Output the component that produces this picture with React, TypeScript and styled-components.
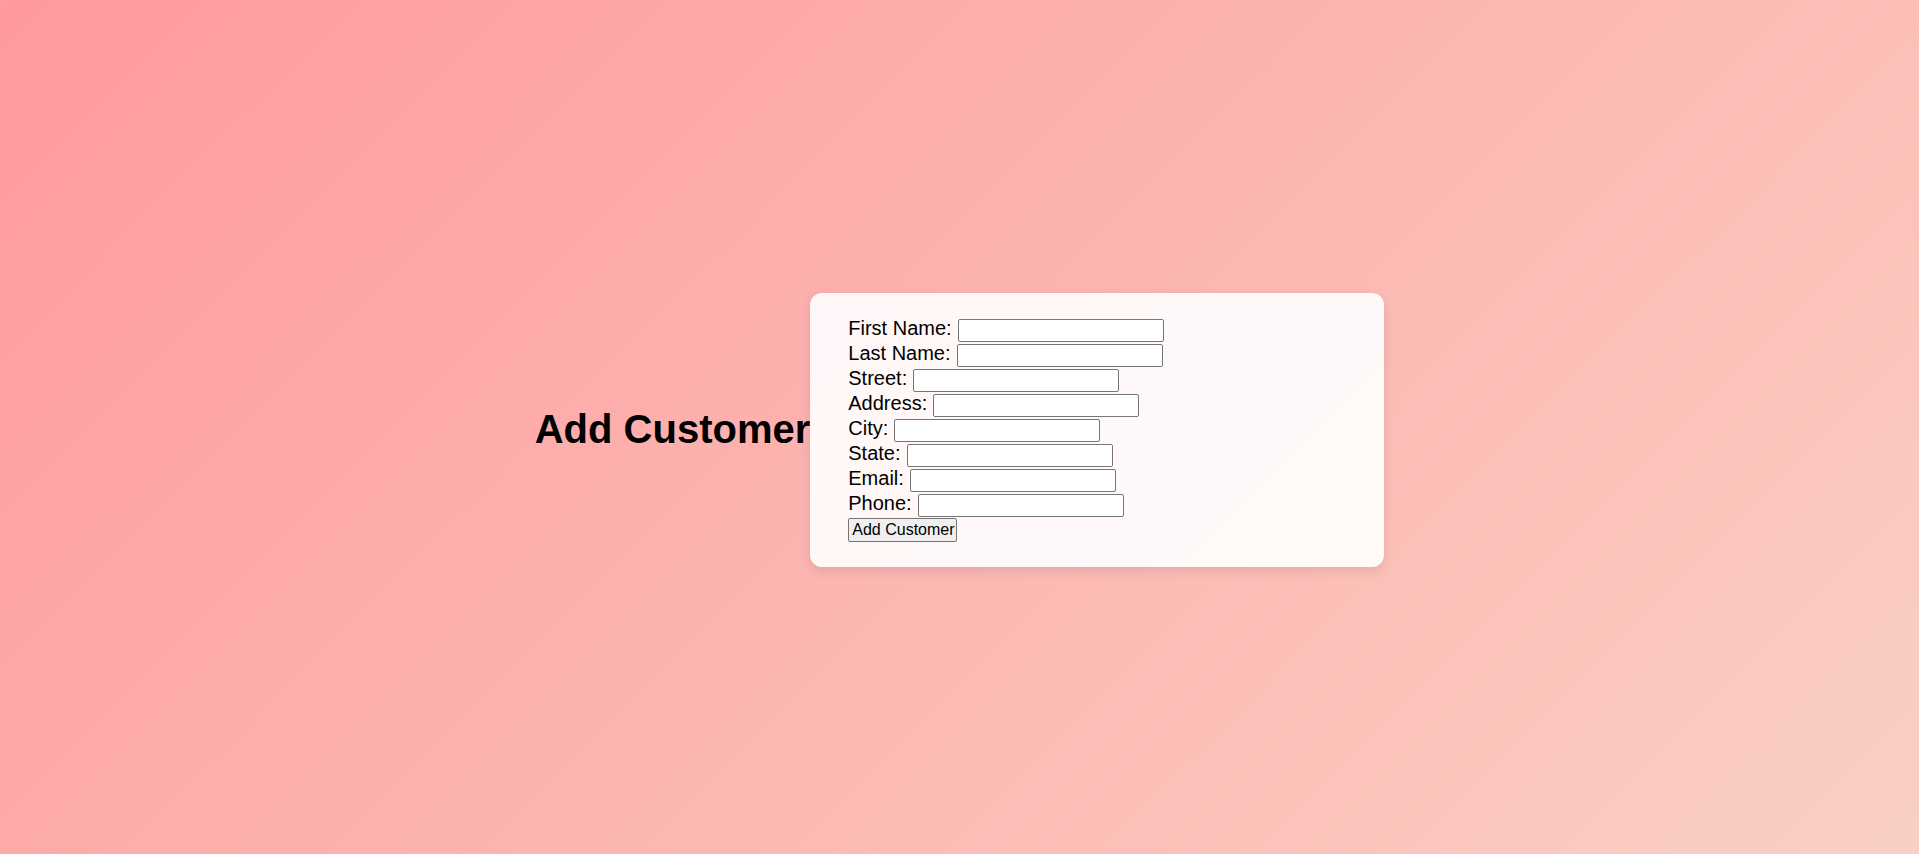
import React from 'react';
import styled, { createGlobalStyle } from 'styled-components';

const GlobalStyle = createGlobalStyle`
  html, body {
    margin: 0;
    padding: 0;
  }
  body {
    font-family: "Liberation Sans", Arial, sans-serif;
    background: linear-gradient(135deg, #ff9a9e 0%, #fad0c4 100%);
    min-height: 100vh;
  }
`;

const Page = styled.div`
  box-sizing: border-box;
  min-height: 100vh;
  padding-top: 5px;
  display: flex;
  justify-content: center;
  align-items: center;
`;

const Title = styled.h1`
  margin: 0;
  font-size: 40px;
  font-weight: bold;
  color: #000;
`;

const Card = styled.div`
  box-sizing: border-box;
  width: 574px;
  padding: 23px 38px 25px;
  background: rgba(255, 255, 255, 0.9);
  border-radius: 12px;
  box-shadow: 0 4px 12px rgba(0, 0, 0, 0.1);
`;

const Form = styled.form`
  display: flex;
  flex-direction: column;
`;

const Row = styled.div`
  display: flex;
  align-items: flex-start;
  height: 25px;
  gap: 6px;
`;

const Label = styled.label`
  font-size: 20px;
  line-height: 25px;
  color: #000;
  white-space: nowrap;
`;

const Input = styled.input`
  box-sizing: border-box;
  width: 206px;
  height: 23px;
  margin: 3px 0 0;
  padding: 1px 2px;
  border: 1px solid #767676;
  border-radius: 2px;
  background: #fff;
  font-size: 13px;
`;

const SubmitRow = styled.div`
  display: flex;
  padding-top: 2px;
`;

const Button = styled.button`
  box-sizing: border-box;
  height: 24px;
  margin: 0;
  padding: 0 1px 0 3px;
  border: 1px solid #767676;
  border-radius: 2px;
  background: #efefef;
  color: #000;
  font-family: "Liberation Sans", Arial, sans-serif;
  font-size: 16px;
  line-height: 20px;
`;

const fields = [
  { id: 'firstName', label: 'First Name:' },
  { id: 'lastName', label: 'Last Name:' },
  { id: 'street', label: 'Street:' },
  { id: 'address', label: 'Address:' },
  { id: 'city', label: 'City:' },
  { id: 'state', label: 'State:' },
  { id: 'email', label: 'Email:' },
  { id: 'phone', label: 'Phone:' },
];

const App: React.FC = () => {
  return (
    <>
      <GlobalStyle />
      <Page>
        <Title>Add Customer</Title>
        <Card>
          <Form onSubmit={(e) => e.preventDefault()}>
            {fields.map((f) => (
              <Row key={f.id}>
                <Label htmlFor={f.id}>{f.label}</Label>
                <Input id={f.id} type="text" />
              </Row>
            ))}
            <SubmitRow>
              <Button type="submit">Add Customer</Button>
            </SubmitRow>
          </Form>
        </Card>
      </Page>
    </>
  );
};

export default App;
